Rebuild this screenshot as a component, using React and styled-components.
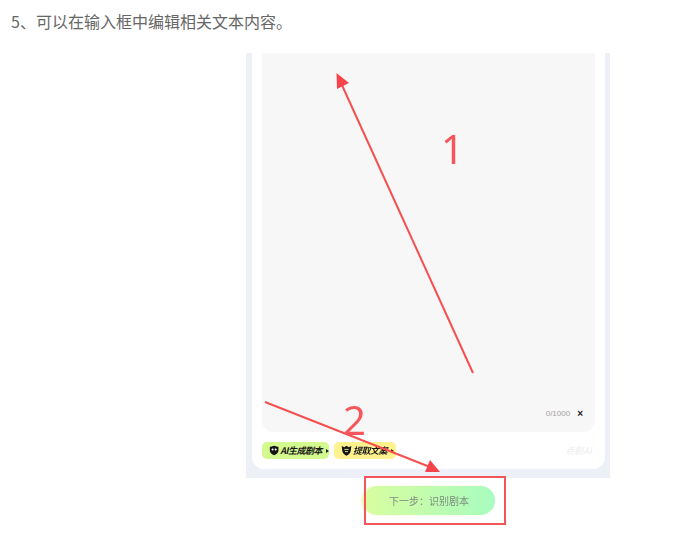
import styled, { createGlobalStyle } from "styled-components";

const GlobalStyle = createGlobalStyle`
  html, body {
    margin: 0;
    padding: 0;
    background: #fff;
  }
  body {
    font-family: "Noto Sans CJK SC", "Liberation Sans", sans-serif;
  }
`;

export default function App() {
  return (
    <>
      <GlobalStyle />
      <Page>
        <Intro>5、可以在输入框中编辑相关文本内容。</Intro>
        <Shot>
          <Frame>
            <Card>
              <TextBox>
                <Counter>0/1000</Counter>
                <ClearMark>×</ClearMark>
              </TextBox>
              <Toolbar>
                <Pill $bg="#d4f98f" $width={67}>
                  <ShieldIcon />
                  <PillLabel>AI生成剧本</PillLabel>
                  <Caret />
                </Pill>
                <Pill $bg="#fdf28e" $width={62}>
                  <CrestIcon />
                  <PillLabel>提取文案</PillLabel>
                  <Caret />
                </Pill>
                <Brand>点剧AI</Brand>
              </Toolbar>
            </Card>
          </Frame>
          <NextRow>
            <NextButton>下一步：识别剧本</NextButton>
          </NextRow>
        </Shot>

        <Arrows width="691" height="534" viewBox="0 0 691 534">
          <line x1="473" y1="373" x2="341" y2="83" />
          <polygon points="336.5,73 349,83 337,89" />
          <line x1="265" y1="402" x2="430" y2="467" />
          <polygon points="440,472 430,460 425,472" />
        </Arrows>
        <Step $x={441} $y={122}>1</Step>
        <Step $x={343} $y={393}>2</Step>
        <Highlight />
      </Page>
    </>
  );
}

function ShieldIcon() {
  return (
    <svg width="11" height="11" viewBox="0 0 10 10">
      <path
        d="M.8 1.6 5 .4l4.2 1.2v3.5C9.2 7.4 7 9 5 9.7 3 9 .8 7.4.8 5.1z"
        fill="#151515"
      />
      <circle cx="3.5" cy="4" r="1" fill="#fff" />
      <circle cx="6.5" cy="4" r="1" fill="#fff" />
    </svg>
  );
}

function CrestIcon() {
  return (
    <svg width="11" height="11" viewBox="0 0 10 10">
      <path
        d="M.6 1 3 2 5 .6 7 2l2.4-1-.6 4.4C8.4 7.6 6.6 9.2 5 9.7 3.4 9.2 1.6 7.6 1.2 5.4z"
        fill="#151515"
      />
      <path d="M3 4h4M3.6 6h2.8" stroke="#fdf28e" strokeWidth="0.8" />
    </svg>
  );
}

const Page = styled.div`
  position: relative;
  width: 691px;
  height: 534px;
  overflow: hidden;
`;
const Intro = styled.p`
  margin: 0;
  padding: 10px 0 0 11px;
  height: 53px;
  box-sizing: border-box;
  font-size: 16px;
  line-height: 23px;
  color: #666;
`;
const Shot = styled.div`
  margin-left: 246px;
  width: 364px;
  filter: blur(0.35px);
`;
const Frame = styled.div`
  height: 425px;
  box-sizing: border-box;
  padding: 0 5px 9px 6px;
  background: #eef0f7;
`;
const Card = styled.div`
  height: 100%;
  box-sizing: border-box;
  padding: 0 10px;
  background: #fff;
  border-radius: 0 0 12px 12px;
  display: flex;
  flex-direction: column;
`;
const TextBox = styled.div`
  height: 379px;
  flex: none;
  box-sizing: border-box;
  padding: 0 12px 12px 0;
  background: #f7f7f7;
  border-radius: 0 0 12px 12px;
  display: flex;
  align-items: flex-end;
  justify-content: flex-end;
  gap: 7px;
`;
const Counter = styled.span`
  font-family: "Liberation Sans", sans-serif;
  font-size: 8px;
  line-height: 12px;
  color: #a3a3a3;
`;
const ClearMark = styled.span`
  font-family: "Liberation Sans", sans-serif;
  font-size: 10px;
  font-weight: 700;
  line-height: 12px;
  color: #222;
`;
const Toolbar = styled.div`
  display: flex;
  align-items: center;
  gap: 5px;
  margin-top: 10px;
`;
const Pill = styled.div`
  width: ${(p) => p.$width}px;
  height: 17px;
  box-sizing: border-box;
  padding-left: 7px;
  border-radius: 5px;
  background: ${(p) => p.$bg};
  display: flex;
  align-items: center;
  gap: 1px;
`;
const PillLabel = styled.span`
  font-size: 9px;
  font-weight: 700;
  font-style: italic;
  letter-spacing: -0.5px;
  color: #1a1a1a;
  white-space: nowrap;
`;
const Caret = styled.span`
  margin-left: 3px;
  border-left: 3px solid #222;
  border-top: 2px solid transparent;
  border-bottom: 2px solid transparent;
`;
const Brand = styled.span`
  margin-left: auto;
  padding-right: 3px;
  font-size: 9px;
  font-weight: 700;
  font-style: italic;
  color: #f0f0f0;
`;
const NextRow = styled.div`
  padding: 8px 0 0 117px;
`;
const NextButton = styled.div`
  width: 132px;
  height: 29px;
  border-radius: 15px;
  background: linear-gradient(90deg, #d9fd9f 0%, #a8fcc0 100%);
  box-shadow: -2px 0 2px #f8f6c0;
  display: flex;
  align-items: center;
  justify-content: center;
  font-size: 10px;
  color: #7c8c7e;
`;
const Arrows = styled.svg`
  position: absolute;
  top: 0;
  left: 0;
  pointer-events: none;
  line {
    stroke: #f5504f;
    stroke-width: 2;
  }
  polygon {
    fill: #f5454a;
  }
`;
const Step = styled.span`
  position: absolute;
  left: ${(p) => p.$x}px;
  top: ${(p) => p.$y}px;
  font-family: "Noto Sans", sans-serif;
  font-size: 40px;
  line-height: 54px;
  color: #f6575b;
`;
const Highlight = styled.div`
  position: absolute;
  left: 364px;
  top: 476px;
  width: 142px;
  height: 49px;
  box-sizing: border-box;
  border: 2px solid #f2555a;
`;
